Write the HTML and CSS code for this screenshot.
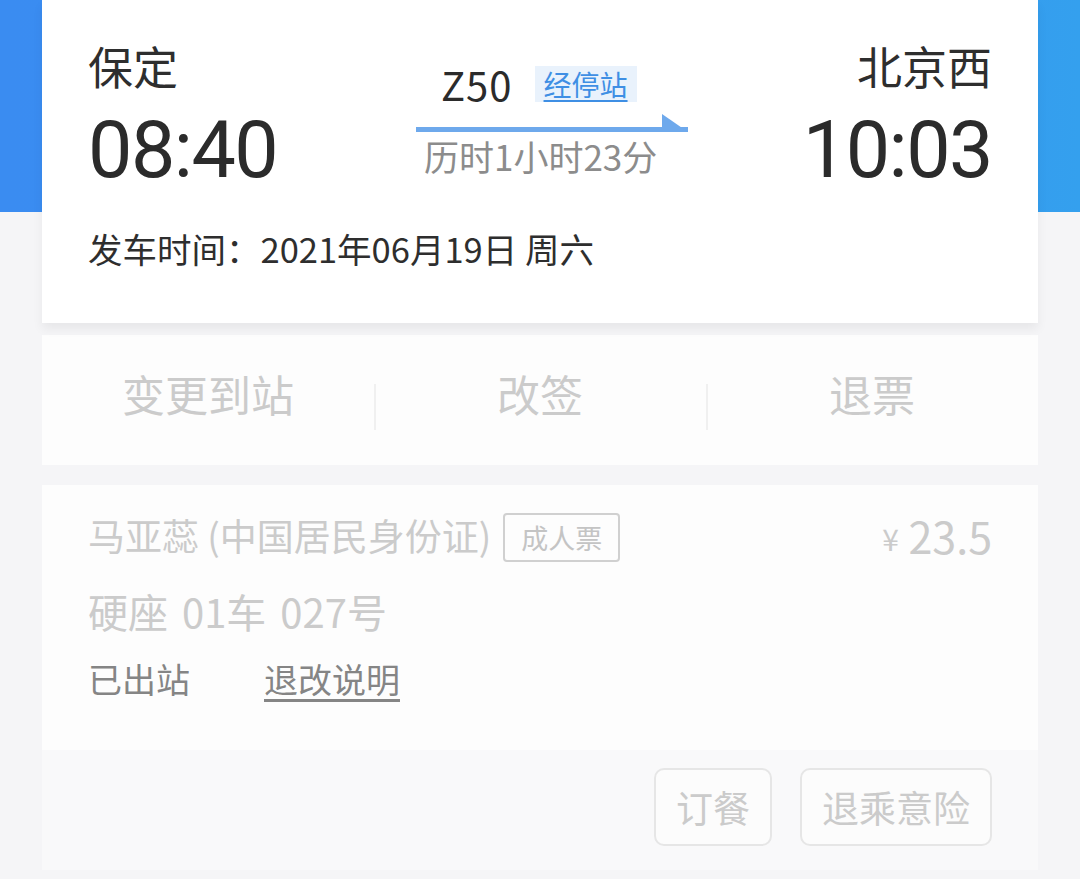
FILE: index.html
```html
<!DOCTYPE html>
<html lang="zh-CN">
<head>
<meta charset="utf-8">
<title>车票详情</title>
<link rel="stylesheet" href="styles.css">
</head>
<body>
<div class="page">
  <section class="card trip">
    <div class="route">
      <div class="end start">
        <div class="station">保定</div>
        <div class="time">08:40</div>
      </div>
      <div class="mid">
        <div class="train-row">
          <span class="train">Z50</span>
          <span class="stops">经停站</span>
        </div>
        <svg class="arrow" width="272" height="19" viewBox="0 0 272 19">
          <rect x="0" y="13" width="272" height="5" fill="#6ea9ec"/>
          <polygon points="246,0 272,18 246,18" fill="#6ea9ec"/>
        </svg>
        <div class="duration">历时1小时23分</div>
      </div>
      <div class="end finish">
        <div class="station">北京西</div>
        <div class="time">10:03</div>
      </div>
    </div>
    <div class="date">发车时间：2021年06月19日 周六</div>
  </section>

  <section class="card actions">
    <div class="action">变更到站</div>
    <div class="action">改签</div>
    <div class="action">退票</div>
  </section>

  <section class="card passenger">
    <div class="info">
      <div class="row name-row">
        <span class="name">马亚蕊 (中国居民身份证)</span>
        <span class="badge">成人票</span>
        <span class="price"><span class="yen">¥</span> 23.5</span>
      </div>
      <div class="row seat">硬座 01车 027号</div>
      <div class="row status">
        <span class="exited">已出站</span>
        <span class="rules">退改说明</span>
      </div>
    </div>
    <div class="footer">
      <span class="btn">订餐</span>
      <span class="btn">退乘意险</span>
    </div>
  </section>
</div>
</body>
</html>
```

FILE: styles.css
```css
* { box-sizing: border-box; }
html, body { margin: 0; padding: 0; }
body {
  width: 1080px;
  height: 879px;
  overflow: hidden;
  font-family: "Noto Sans CJK SC", "Noto Sans", sans-serif;
  background:
    linear-gradient(to bottom, transparent 0, transparent 212px, #f5f5f7 212px),
    linear-gradient(to right, #3a8cf1 0%, #3a8ff0 60%, #34a0ee 100%);
  background-color: #f5f5f7;
  color: #333;
}
.page {
  padding: 0 42px;
  display: flex;
  flex-direction: column;
}
.card {
  background: #fff;
}
.trip {
  height: 323px;
  padding: 40px 46px 0;
  box-shadow: 0 6px 10px rgba(0,0,0,0.06);
  position: relative;
  z-index: 1;
}
.route {
  display: grid;
  grid-template-columns: 1fr auto 1fr;
  align-items: start;
}
.end { display: flex; flex-direction: column; }
.finish { align-items: flex-end; }
.station {
  font-size: 45px;
  line-height: 52px;
  color: #2e2e2e;
}
.time {
  margin-top: 18px;
  font-family: Roboto, "Noto Sans", sans-serif;
  font-size: 79px;
  line-height: 80px;
  color: #2b2b2b;
  letter-spacing: -1.5px;
}
.mid {
  margin-left: 24px;
  width: 272px;
  padding-top: 24px;
  display: flex;
  flex-direction: column;
}
.train-row {
  display: flex;
  align-items: center;
  padding-left: 25px;
  height: 40px;
}
.train {
  font-size: 40px;
  line-height: 40px;
  color: #2b2b2b;
  letter-spacing: 1px;
}
.stops {
  margin-left: 22px;
  background: #e9f2fc;
  color: #3f8fe4;
  font-size: 28px;
  line-height: 36px;
  padding: 0 9px;
  text-decoration: underline;
  text-underline-offset: 4px;
}
.arrow { display: block; margin-top: 10px; }
.duration {
  padding-left: 8px;
  font-size: 35px;
  line-height: 46px;
  color: #8c8c8c;
}
.date {
  margin-top: 36px;
  font-size: 34.5px;
  line-height: 44px;
  color: #2e2e2e;
}

.actions {
  margin-top: 12px;
  height: 130px;
  display: flex;
  align-items: center;
  padding-bottom: 14px;
  background: #fdfdfd;
}
.action {
  flex: 1;
  text-align: center;
  font-size: 43px;
  line-height: 50px;
  color: #cbcbcb;
  position: relative;
}
.action + .action::before {
  content: "";
  position: absolute;
  left: 0;
  top: 16px;
  height: 46px;
  border-left: 2px solid #f0f0f0;
}

.passenger {
  margin-top: 20px;
  height: 385px;
  background: #fdfdfd;
  display: flex;
  flex-direction: column;
}
.info {
  padding: 24px 46px 0;
  height: 265px;
}
.row { display: flex; align-items: center; }
.name-row { height: 52px; }
.name {
  font-size: 37px;
  color: #cbcbcb;
}
.badge {
  margin-left: 12px;
  margin-top: 4px;
  border: 2px solid #d0d0d0;
  border-radius: 4px;
  font-size: 27px;
  line-height: 45px;
  padding: 0 16px;
  color: #c4c4c4;
}
.price {
  margin-left: auto;
  font-size: 43px;
  color: #cbcbcb;
}
.yen { font-size: 30px; vertical-align: 3px; }
.seat {
  margin-top: 26px;
  font-size: 40px;
  line-height: 48px;
  color: #cbcbcb;
  word-spacing: 5px;
}
.status {
  margin-top: 20px;
  font-size: 34px;
  line-height: 48px;
  color: #858585;
}
.rules {
  margin-left: 74px;
  text-decoration: underline;
  text-underline-offset: 6px;
}
.footer {
  flex: 1;
  background: #f9f9fa;
  display: flex;
  justify-content: flex-end;
  align-items: flex-start;
  padding: 18px 46px 0;
  gap: 28px;
}
.btn {
  border: 2px solid #e6e6e6;
  border-radius: 10px;
  height: 78px;
  display: flex;
  align-items: center;
  padding: 0 20px;
  font-size: 37px;
  color: #cbcbcb;
  background: #fcfcfc;
}
```
